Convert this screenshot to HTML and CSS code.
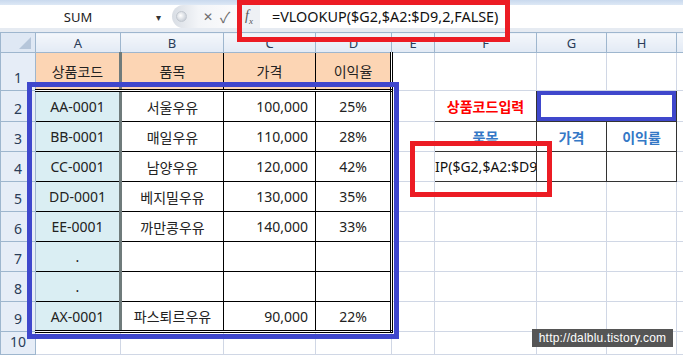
FILE: index.html
```
<html>
	<head>
		<meta charset="utf-8">
		<link rel="stylesheet" href="styles.css">
	</head>
	<body>
		<div class="app">
			<div class="ribbonEdge"></div>
			<div class="formulaBar">
				<div class="nameBox"><span class="name">SUM</span><span class="drop">&#9662;</span></div>
				<div class="fxButtons"><span class="knob"></span><span class="cancel">&#10005;</span><span class="enter">&#10003;</span></div>
				<div class="fx">f<sub>x</sub></div>
				<div class="formula">=VLOOKUP($G2,$A2:$D9,2,FALSE)</div>
			</div>
			<table class="sheet">
				<colgroup>
					<col class="w-rh"><col class="w-a"><col class="w-b"><col class="w-c"><col class="w-d">
					<col class="w-e"><col class="w-f"><col class="w-g"><col class="w-h"><col class="w-i">
				</colgroup>
				<tr class="heads">
					<th class="corner"><span class="tri"></span></th>
					<th>A</th><th>B</th><th>C</th><th>D</th><th>E</th><th>F</th><th>G</th><th>H</th><th></th>
				</tr>
				<tr class="r1">
					<th class="rh">1</th>
					<td class="hd colA">상품코드</td><td class="hd">품목</td><td class="hd">가격</td><td class="hd lastD">이익율</td>
					<td></td><td></td><td></td><td></td><td></td>
				</tr>
				<tr>
					<th class="rh">2</th>
					<td class="code colA">AA-0001</td><td class="name">서울우유</td><td class="num">100,000</td><td class="pct lastD">25%</td>
					<td></td><td class="box label">상품코드입력</td><td class="box input" colspan="2"><div class="inputFrame"></div></td><td></td>
				</tr>
				<tr>
					<th class="rh">3</th>
					<td class="code colA">BB-0001</td><td class="name">매일우유</td><td class="num">110,000</td><td class="pct lastD">28%</td>
					<td></td><td class="box sub">품목</td><td class="box sub">가격</td><td class="box sub">이익률</td><td></td>
				</tr>
				<tr>
					<th class="rh">4</th>
					<td class="code colA">CC-0001</td><td class="name">남양우유</td><td class="num">120,000</td><td class="pct lastD">42%</td>
					<td></td><td class="box edit">IP($G2,$A2:$D9</td><td class="box"></td><td class="box"></td><td></td>
				</tr>
				<tr>
					<th class="rh">5</th>
					<td class="code colA">DD-0001</td><td class="name">베지밀우유</td><td class="num">130,000</td><td class="pct lastD">35%</td>
					<td></td><td></td><td></td><td></td><td></td>
				</tr>
				<tr>
					<th class="rh">6</th>
					<td class="code colA">EE-0001</td><td class="name">까만콩우유</td><td class="num">140,000</td><td class="pct lastD">33%</td>
					<td></td><td></td><td></td><td></td><td></td>
				</tr>
				<tr>
					<th class="rh">7</th>
					<td class="code colA">.</td><td class="name"></td><td class="num"></td><td class="pct lastD"></td>
					<td></td><td></td><td></td><td></td><td></td>
				</tr>
				<tr>
					<th class="rh">8</th>
					<td class="code colA">.</td><td class="name"></td><td class="num"></td><td class="pct lastD"></td>
					<td></td><td></td><td></td><td></td><td></td>
				</tr>
				<tr class="r9">
					<th class="rh">9</th>
					<td class="code colA">AX-0001</td><td class="name">파스퇴르우유</td><td class="num">90,000</td><td class="pct lastD">22%</td>
					<td></td><td></td><td></td><td></td><td></td>
				</tr>
				<tr class="r10">
					<th class="rh">10</th>
					<td></td><td></td><td></td><td></td><td></td><td></td><td></td><td></td><td></td>
				</tr>
			</table>
			<div class="mark redFormula"></div>
			<div class="mark redCell"></div>
			<div class="mark blueRange"></div>
			<div class="watermark">http://dalblu.tistory.com</div>
		</div>
	</body>
</html>
```

FILE: styles.css
```
body{
	margin:0;
	background-color:white;
	font-family: "Noto Sans", "Noto Sans CJK KR", sans-serif;
	color:#222222;
}
.app{
	position:relative;
	width:683px;
	height:358px;
	overflow:hidden;
}
.ribbonEdge{
	height:5px;
	background: linear-gradient(#c9d9ee, #dde8f5);
}
.formulaBar{
	display:flex;
	align-items:center;
	height:23px;
	background-color:white;
	border-bottom:4px solid #e6ebf2;
}
.nameBox{
	display:flex;
	align-items:center;
	width:172px;
	font-size:13px;
	color:#222;
}
.nameBox .name{
	width:156px;
	text-align:center;
}
.nameBox .drop{
	font-size:10px;
	color:#333;
}
.fxButtons{
	display:flex;
	align-items:center;
	width:66px;
	height:23px;
	padding-left:4px;
	box-sizing:border-box;
	border-radius:12px 0 0 12px;
	background: linear-gradient(90deg, #d8dde4, #f3f5f8 40%, #fbfbfc);
	color:#6d6d6d;
}
.knob{
	width:9px;
	height:9px;
	border-radius:50%;
	background: radial-gradient(circle at 40% 40%, #ffffff, #b9c1cc);
	border:1px solid #c2c8d0;
}
.cancel{
	margin-left:16px;
	font-size:12px;
}
.enter{
	margin-left:7px;
	font-size:15px;
}
.fx{
	width:22px;
	height:23px;
	line-height:21px;
	text-align:center;
	background:#eef1f5;
	font-family: "Liberation Serif", serif;
	font-style:italic;
	font-size:14px;
	color:#555;
}
.fx sub{
	font-size:9px;
}
.formula{
	padding-left:12px;
	font-size:14.4px;
	color:#111;
}
.sheet{
	border-collapse:collapse;
	table-layout:fixed;
	width:703px;
}
.w-rh{ width:35px; }
.w-a{ width:85px; }
.w-b{ width:103px; }
.w-c{ width:92px; }
.w-d{ width:76px; }
.w-e{ width:43px; }
.w-f{ width:102px; }
.w-g{ width:70px; }
.w-h{ width:70px; }
.w-i{ width:27px; }
.sheet td{
	border:1px solid #d0d7e5;
	height:30px;
	padding:0;
	font-size:14px;
	text-align:center;
	white-space:nowrap;
	overflow:hidden;
}
.heads th{
	height:20px;
	padding:0;
	font-weight:normal;
	font-size:13px;
	color:#2a3c58;
	background: linear-gradient(#f4f7fb, #e2eaf5);
	border:1px solid #9eb6ce;
}
.heads .corner{
	position:relative;
	background:#dfe8f4;
}
.tri{
	position:absolute;
	right:4px;
	bottom:3px;
	width:0;
	height:0;
	border-left:12px solid transparent;
	border-bottom:12px solid #b6c6da;
}
.rh{
	padding:0 0 3px 0;
	vertical-align:bottom;
	font-weight:normal;
	font-size:14px;
	color:#2a3c58;
	background:#e6edf7;
	border:1px solid #9eb6ce;
}
.r1 td{
	height:38px;
}
.r1 .hd{
	background:#fcd5b4;
	border:1px solid #000;
	border-bottom:3px double #000;
}
.r10 td{
	height:20px;
}
.code{
	background:#daeef3;
}
.sheet .code, .sheet .name, .sheet .num, .sheet .pct{
	border:1px solid #000;
}
.sheet .colA{
	border-right:3px solid #6f7b7b;
}
.sheet .lastD{
	border-right:3px double #000;
}
.sheet .num{
	text-align:right;
	padding-right:7px;
}
.r9 td.code, .r9 td.name, .r9 td.num, .r9 td.pct{
	border-bottom:3px double #000;
}
.sheet .box{
	border:1px solid #333;
}
.label{
	color:#ff0000;
	font-weight:bold;
}
.sub{
	color:#3478c6;
	font-weight:bold;
}
.sheet .edit{
	text-align:left;
	font-size:14px;
	color:#111;
}
.sheet .input{
	padding:0;
}
.inputFrame{
	height:22px;
	border:4px solid #3f47cc;
}
.mark{
	position:absolute;
	box-sizing:border-box;
}
.redFormula{
	left:237px;
	top:0;
	width:273px;
	height:42px;
	border:5px solid #ec1c24;
}
.redCell{
	left:410px;
	top:141px;
	width:142px;
	height:56px;
	border:5px solid #ec1c24;
}
.blueRange{
	left:27px;
	top:82px;
	width:372px;
	height:257px;
	border:5px solid #3f47cc;
}
.watermark{
	position:absolute;
	left:532px;
	top:329px;
	width:141px;
	height:18px;
	line-height:18px;
	background:#555555;
	color:white;
	font-family: "Liberation Sans", sans-serif;
	font-size:12px;
	letter-spacing:0.2px;
	text-align:center;
}
```
